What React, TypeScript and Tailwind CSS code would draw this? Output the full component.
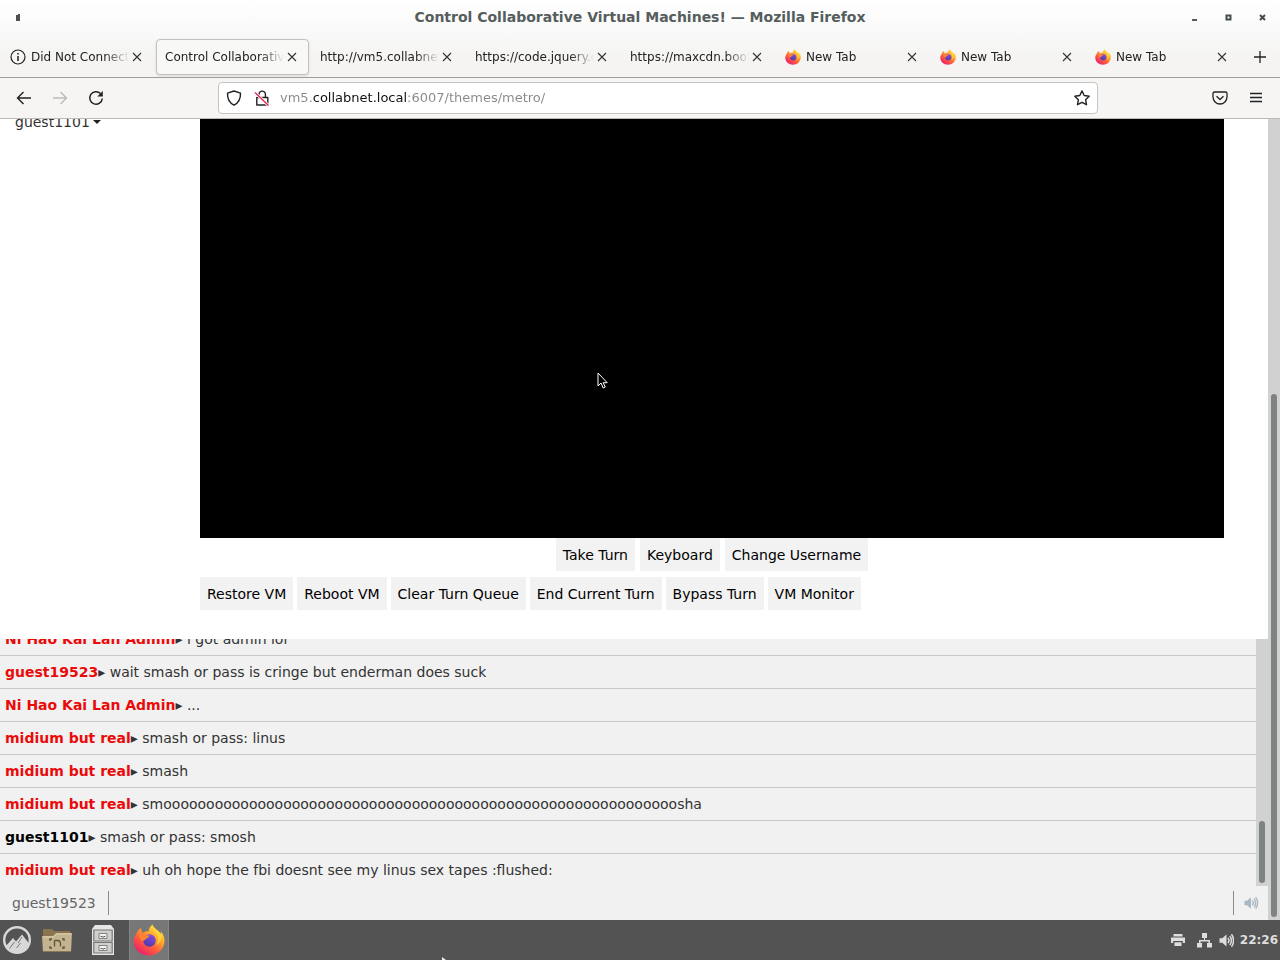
import { useState } from 'react';
import type { ReactNode } from 'react';

interface Tab {
  title: string;
  icon?: 'info' | 'firefox';
  active?: boolean;
}

interface Message {
  user: string;
  text: string;
  self?: boolean;
}

const tabs: Tab[] = [
  { title: 'Did Not Connect', icon: 'info' },
  { title: 'Control Collaborativ', active: true },
  { title: 'http://vm5.collabnet' },
  { title: 'https://code.jquery.c' },
  { title: 'https://maxcdn.boot' },
  { title: 'New Tab', icon: 'firefox' },
  { title: 'New Tab', icon: 'firefox' },
  { title: 'New Tab', icon: 'firefox' },
];

const turnActions = ['Take Turn', 'Keyboard', 'Change Username'];

const adminActions = [
  'Restore VM',
  'Reboot VM',
  'Clear Turn Queue',
  'End Current Turn',
  'Bypass Turn',
  'VM Monitor',
];

const messages: Message[] = [
  { user: 'Ni Hao Kai Lan Admin', text: 'i got admin lol' },
  { user: 'guest19523', text: 'wait smash or pass is cringe but enderman does suck' },
  { user: 'Ni Hao Kai Lan Admin', text: '...' },
  { user: 'midium but real', text: 'smash or pass: linus' },
  { user: 'midium but real', text: 'smash' },
  { user: 'midium but real', text: 'smoooooooooooooooooooooooooooooooooooooooooooooooooooooooooooosha' },
  { user: 'guest1101', text: 'smash or pass: smosh', self: true },
  { user: 'midium but real', text: 'uh oh hope the fbi doesnt see my linus sex tapes :flushed:' },
];

function FirefoxLogo({ className, id }: { className: string; id: string }) {
  return (
    <svg viewBox="0 0 32 32" className={className} aria-hidden="true">
      <defs>
        <linearGradient id={`${id}-body`} x1="0.85" y1="0.05" x2="0.2" y2="0.95">
          <stop offset="0" stopColor="#fff04a" />
          <stop offset="0.35" stopColor="#ffa52c" />
          <stop offset="0.65" stopColor="#ff5a3c" />
          <stop offset="1" stopColor="#e81e70" />
        </linearGradient>
        <linearGradient id={`${id}-globe`} x1="0.7" y1="0" x2="0.3" y2="1">
          <stop offset="0" stopColor="#8a4be0" />
          <stop offset="1" stopColor="#4b3ba8" />
        </linearGradient>
      </defs>
      <path
        d="M19.500.5c-2.400 1.800-3.700 4.200-3.800 6.800-2.200-.3-4.300.3-5.900 1.600C8.500 7.700 8 6 8.100 4 5.800 5 4.200 7.200 3.500 9.400 1.700 11.900.5 14.700.5 17.500.8 25.400 7.500 31.500 16 31.500S31.500 25.200 31.500 17c0-4.200-1.600-7.600-4-9.800.5 1.200.7 2.200.7 3.300C26.200 6 20.700 5 19.500.5z"
        fill={`url(#${id}-body)`}
      />
      <circle cx="16.500" cy="16.500" r="6.200" fill={`url(#${id}-globe)`} />
      <path
        d="M6 12c2-2 4.500-2.200 6.500-1.200 1.200.8 2.300.7 4 .8-.2 1.700-2.500 2.200-3.300 3.400-1.200 1-2 1-2.700 1.500C8 18 8 14.500 6 12z"
        fill="#ff8430"
      />
      <path d="M20 2c-1.600 4 3.200 6.500 4.500 10 1 3 .3 6.500-1.500 9 4.200-1.500 6-5.500 5.200-10.500C26 7 21 6 20 2z" fill="#ffd83a" opacity="0.75" />
    </svg>
  );
}

function CloseIcon() {
  return (
    <svg viewBox="0 0 10 10" className="size-2.5" fill="none" stroke="#333" strokeWidth="1.1">
      <path d="M1 1l8 8M9 1L1 9" />
    </svg>
  );
}

function Speaker({ className }: { className: string }) {
  return (
    <svg viewBox="0 0 16 16" className={className} fill="none" stroke="currentColor" strokeWidth="1.6" aria-hidden="true">
      <path d="M0.500 5.500h3L8 1.500v13L3.500 10.500h-3z" fill="currentColor" stroke="none" />
      <path d="M9.500 5.300c1.300 1.500 1.300 3.900 0 5.400M11.500 3.200c2.300 2.700 2.300 6.900 0 9.600M13.300 1.300c3 3.800 3 9.600 0 13.400" />
    </svg>
  );
}

function TitleBar() {
  return (
    <div className="flex h-[34px] items-center pr-px text-[#555d5d]">
      <button aria-label="Window menu" className="flex w-9 justify-center">
        <svg viewBox="0 0 4 7" className="h-[7px] w-1" fill="#4b5050">
          <path d="M0 1h2V0h2v7H0z" />
        </svg>
      </button>
      <div className="w-[67px]" />
      <h1 className="flex-1 text-center text-sm font-bold">
        Control Collaborative Virtual Machines! — Mozilla Firefox
      </h1>
      <div className="flex">
        <button aria-label="Minimize" className="flex w-[34px] justify-center">
          <svg viewBox="0 0 7 7" className="size-[7px]" fill="currentColor">
            <path d="M1 5h5v2H1z" />
          </svg>
        </button>
        <button aria-label="Maximize" className="flex w-[34px] justify-center">
          <svg viewBox="0 0 7 7" className="size-[7px]" fill="none" stroke="#444c4c" strokeWidth="2">
            <path d="M1.500 1.500h4v4h-4z" />
          </svg>
        </button>
        <button aria-label="Close" className="flex w-[34px] justify-center">
          <svg viewBox="0 0 7 7" className="size-[7px]" fill="none" stroke="#444c4c" strokeWidth="2">
            <path d="M1 1l5 5M6 1L1 6" />
          </svg>
        </button>
      </div>
    </div>
  );
}

function TabItem({ tab, id }: { tab: Tab; id: string }) {
  return (
    <div
      className={
        tab.active
          ? 'mx-px flex h-9 min-w-0 flex-1 items-center rounded border border-[#c4c2c0] bg-[#f8f8f7] pl-2 pr-2.5 shadow-sm'
          : 'flex h-9 min-w-0 flex-1 items-center pl-2.5 pr-3'
      }
    >
      {tab.icon === 'info' && (
        <svg viewBox="0 0 16 16" className="mr-[5px] size-4 shrink-0" fill="none" stroke="#222" strokeWidth="1.2">
          <circle cx="8" cy="8" r="7" />
          <path d="M8 7v5M8 4v1.600" strokeWidth="1.500" />
        </svg>
      )}
      {tab.icon === 'firefox' && <FirefoxLogo id={id} className="mr-[5px] size-4 shrink-0" />}
      <button className="min-w-0 flex-1 overflow-hidden text-left text-xs whitespace-nowrap text-[#222] [mask-image:linear-gradient(to_left,transparent,black_24px)]">
        {tab.title}
      </button>
      <button aria-label={`Close ${tab.title}`} className="flex w-3.5 shrink-0 justify-end pr-px">
        <CloseIcon />
      </button>
    </div>
  );
}

function NavBar() {
  const [url, setUrl] = useState('vm5.collabnet.local:6007/themes/metro/');

  return (
    <div className="flex h-[41px] items-center border-t border-[#a09e9c] bg-[#f6f5f4]">
      <div className="flex w-[218px] pl-1.5">
        <button aria-label="Back" className="flex size-9 items-center justify-center">
          <svg viewBox="0 0 16 16" className="size-4" fill="none" stroke="#222" strokeWidth="1.400">
            <path d="M15 8H1.500M7.500 2l-6 6 6 6" />
          </svg>
        </button>
        <button aria-label="Forward" disabled className="flex size-9 items-center justify-center">
          <svg viewBox="0 0 16 16" className="size-4" fill="none" stroke="#bbb" strokeWidth="1.400">
            <path d="M1 8h13.500M8.500 2l6 6-6 6" />
          </svg>
        </button>
        <button aria-label="Reload" className="flex size-9 items-center justify-center">
          <svg viewBox="0 0 16 16" className="size-4" fill="none" stroke="#222" strokeWidth="1.500">
            <path d="M12.500 3.500A6.300 6.300 0 1 0 14.300 8.500" />
            <path d="M14.800 1v5.500H9.300z" fill="#222" stroke="none" />
          </svg>
        </button>
      </div>
      <div className="flex h-8 flex-1 items-center rounded border border-[#c6c4c2] bg-white pr-[7px] pl-[7px]">
        <svg viewBox="0 0 16 16" className="size-4" fill="none" stroke="#222" strokeWidth="1.400">
          <path d="M8 1L14.500 3.200c.2 5-1.500 9.300-6.500 12-5-2.700-6.700-7-6.500-12z" strokeLinejoin="round" />
        </svg>
        <svg viewBox="0 0 16 16" className="ml-3 size-4" fill="none" stroke="#222" strokeWidth="1.400">
          <path d="M5 7.500V4.300a3.200 3.200 0 0 1 6.400 0v3.200M2.800 7.500h11v7.500h-11z" strokeLinejoin="round" />
          <path d="M1 2.500L14.500 15.500" stroke="#fff" strokeWidth="3" />
          <path d="M1 2.500L14.500 15.500" stroke="#e22850" />
        </svg>
        {/* Host part of the address is darker than the rest */}
        <input
          aria-label="Address"
          value={url}
          onChange={(e) => setUrl(e.target.value)}
          className="ml-2.5 min-w-0 flex-1 bg-[linear-gradient(to_right,#888_32px,#111_32px,#111_127px,#888_127px)] bg-clip-text text-[13px] text-transparent outline-none"
        />
        <button aria-label="Bookmark this page">
          <svg viewBox="0 0 16 16" className="size-4" fill="none" stroke="#222" strokeWidth="1.400" strokeLinejoin="round">
            <path d="M8 .9l2.200 4.600 5 .7-3.600 3.500.9 5L8 12.300l-4.500 2.400.9-5L.8 6.200l5-.7z" />
          </svg>
        </button>
      </div>
      <div className="flex w-[182px] justify-end pr-1.5">
        <button aria-label="Save to Pocket" className="flex size-9 items-center justify-center">
          <svg viewBox="0 0 16 16" className="size-4" fill="none" stroke="#222" strokeWidth="1.300" strokeLinejoin="round">
            <path d="M2.500 2h11q1.500 0 1.500 1.500v3.500a7 7 0 0 1-14 0V3.500Q1 2 2.500 2z" />
            <path d="M4.500 6.300L8 9.500l3.500-3.200" />
          </svg>
        </button>
        <button aria-label="Open application menu" className="flex size-9 items-center justify-center">
          <svg viewBox="0 0 16 16" className="size-4" fill="none" stroke="#222" strokeWidth="1.300">
            <path d="M2 3.500h12M2 7.500h12M2 11.500h12" />
          </svg>
        </button>
      </div>
    </div>
  );
}

function ActionButton({ children }: { children: ReactNode }) {
  return <button className="h-[33px] bg-[#f2f2f2] px-[7px] text-sm text-black">{children}</button>;
}

function Chat() {
  return (
    <section className="bg-[#f1f1f1]">
      <div className="flex h-[247px]">
        <ul className="flex min-w-0 flex-1 flex-col justify-end overflow-hidden">
          {messages.map((message, i) => (
            <li
              key={i}
              className="h-[33px] shrink-0 border-t border-[#c8c8c8] px-[5px] text-sm leading-8 text-[#333]"
            >
              <span className={message.self ? 'font-bold text-black' : 'font-bold text-[#ea0a0a]'}>
                {message.user}
              </span>
              ▸ {message.text}
            </li>
          ))}
        </ul>
        <div className="flex w-3 flex-col items-center justify-end bg-[#d0d1d0] pb-[3px]">
          <div className="h-[62px] w-1.5 rounded-full bg-[#7e8281]" />
        </div>
      </div>
      <form className="flex h-[34px] items-center" onSubmit={(e) => e.preventDefault()}>
        <label htmlFor="chat-input" className="pr-3 pl-3 text-sm text-[#666]">
          guest19523
        </label>
        <input
          id="chat-input"
          className="h-6 min-w-0 flex-1 border-x border-[#8a8a8a] bg-transparent px-2 text-sm outline-none"
        />
        <button type="button" aria-label="Mute chat" className="flex w-[34px] justify-center text-[#a9b8c0]">
          <Speaker className="h-3.5 w-4" />
        </button>
      </form>
    </section>
  );
}

function Taskbar() {
  return (
    <footer className="relative flex h-10 shrink-0 items-center bg-[#535353] text-[#dedede]">
      <button aria-label="Menu" className="ml-[3px]">
        <svg viewBox="0 0 28 28" className="size-7">
          <circle cx="14" cy="14" r="12.800" fill="#535353" stroke="#d8d8d8" strokeWidth="2.400" />
          <path d="M2.500 20.500L10 12l3 3.500L19 8.500l7 9A12.800 12.800 0 0 1 14 26.500 12.800 12.800 0 0 1 2.500 20.500z" fill="#d8d8d8" />
          <path d="M11.500 16l-5 6.500M19 11l-4 6M17.500 17l-4 5" stroke="#777" strokeWidth="1" fill="none" />
        </svg>
      </button>
      <button aria-label="Files" className="ml-[11px]">
        <svg viewBox="0 0 30 26" className="h-[26px] w-[30px]">
          <path d="M1 2h9l2 2h16v8H1z" fill="#8a7450" />
          <path d="M0 9h11l3-3h16l-1 19H1z" fill="#c3b38e" />
          <path d="M1 10h10.500l3-3H29" fill="none" stroke="#ddd0b0" />
          <path d="M1 24.500h28" stroke="#8a7858" />
          <path d="M12.500 13.500h3q3 0 3 3.500v2.500M12.500 13.500v6M8 14v-2h2M20 12h2v2M8 19v2h2M20 21h2v-2" fill="none" stroke="#5f5138" strokeWidth="1.300" />
        </svg>
      </button>
      <button aria-label="File cabinet" className="ml-5">
        <svg viewBox="0 0 22 30" className="h-[30px] w-[22px]">
          <path d="M3 0h16l3 4v26H0V4z" fill="#e6e6e4" />
          <path d="M1.800 5h18.400v11H1.800zM1.800 17.500h18.400v10.500H1.800z" fill="#cfcfcd" stroke="#777" strokeWidth="1.200" />
          <path d="M7 8.500h8v5H7zM7 20.500h8v5H7z" fill="#f5f5f3" stroke="#777" strokeWidth=".9" />
          <path d="M8.500 11.200q2.500 1.800 5 0M8.500 23.200q2.500 1.800 5 0" fill="none" stroke="#555" />
        </svg>
      </button>
      <button aria-label="Firefox" className="ml-[15px] flex h-10 w-10 items-center justify-center border-x border-[#858585] bg-[#777]">
        <FirefoxLogo id="task" className="size-8" />
      </button>
      {/* Pointer tip */}
      <svg viewBox="0 0 5 3" className="absolute bottom-0 left-[441px] h-[3px] w-[5px]" aria-hidden="true">
        <path d="M1 0l4 3H1z" fill="#eee" />
      </svg>
      <div className="ml-auto flex items-center pr-0.5">
        <svg viewBox="0 0 14 14" className="size-3.5" fill="currentColor">
          <path d="M2.500 1h9v2.500h-9zM0 4.500h14V10h-2.200V8H2.200v2H0zM3.500 9.300h7V13h-7z" />
        </svg>
        <svg viewBox="0 0 15 15" className="ml-3 size-[15px]" fill="currentColor">
          <path d="M5 0h5v5H8v2h5v3h2v4.500h-5V10h1.500V8.500h-8V10H5v4.500H0V10h2V7h5V5H5z" />
        </svg>
        <Speaker className="ml-[7px] size-[15px]" />
        <time className="ml-1.5 text-xs font-bold">22:26</time>
      </div>
    </footer>
  );
}

export default function App() {
  return (
    <div className="flex h-screen flex-col overflow-hidden bg-white font-['DejaVu_Sans',sans-serif]">
      <header className="shrink-0 border-b border-[#bcbab8] bg-linear-to-b from-white to-[#f5f4f3] to-50%">
        <TitleBar />
        <nav className="flex h-[43px] items-center pt-0.5">
          {tabs.map((tab, i) => (
            <TabItem key={i} tab={tab} id={`tab-${i}`} />
          ))}
          <button aria-label="New tab" className="flex w-10 shrink-0 justify-center">
            <svg viewBox="0 0 12 12" className="size-3" fill="none" stroke="#222" strokeWidth="1.300">
              <path d="M6 0v12M0 6h12" />
            </svg>
          </button>
        </nav>
        <NavBar />
      </header>

      <main className="flex min-h-0 flex-1">
        <div className="flex min-w-0 flex-1 flex-col">
          <div className="flex min-h-0 flex-1 overflow-hidden">
            <aside className="w-[200px] shrink-0 pl-[15px]">
              <button className="-mt-[7px] flex items-center gap-[3px] text-sm text-[#333]">
                guest1101
                <svg viewBox="0 0 8 4" className="h-1 w-2" fill="#222">
                  <path d="M0 0h8L4 4z" />
                </svg>
              </button>
            </aside>
            <div className="mr-11 flex min-w-0 flex-1 flex-col pb-[29px]">
              {/* Remote display */}
              <div className="relative min-h-0 flex-1 bg-black">
                <svg viewBox="0 0 12 18" className="absolute top-[253px] left-[397px] h-[18px] w-3">
                  <path d="M1 1v13l3-3 2.200 5 2-1-2-4.300h4z" fill="#000" stroke="#fff" />
                </svg>
              </div>
              <div className="flex justify-center gap-[5px]">
                {turnActions.map((label) => (
                  <ActionButton key={label}>{label}</ActionButton>
                ))}
              </div>
              <div className="mt-1.5 flex gap-1">
                {adminActions.map((label) => (
                  <ActionButton key={label}>{label}</ActionButton>
                ))}
              </div>
            </div>
          </div>
          <Chat />
        </div>
        {/* Page scrollbar */}
        <div className="flex w-3 flex-col items-center justify-end bg-[#d0d1d0] pb-[3px]">
          <div className="h-[523px] w-1.5 rounded-full bg-[#7e8281]" />
        </div>
      </main>

      <Taskbar />
    </div>
  );
}
